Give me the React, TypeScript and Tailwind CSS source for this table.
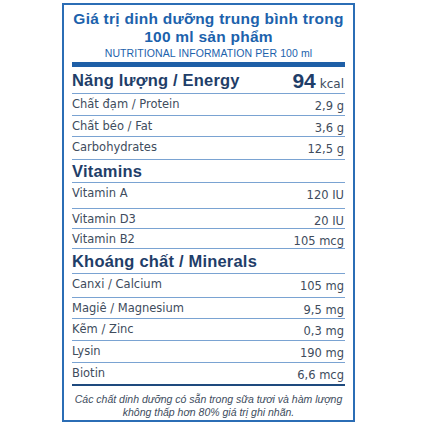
const rows1 = [
  { label: "Chất đạm / Protein", value: "2,9 g", h: "h-[22px]" },
  { label: "Chất béo / Fat", value: "3,6 g", h: "h-[21px]" },
  { label: "Carbohydrates", value: "12,5 g", h: "h-[23px]" },
];

const vitamins = [
  { label: "Vitamin A", value: "120 IU", h: "h-[26px]" },
  { label: "Vitamin D3", value: "20 IU", h: "h-[20px]" },
  { label: "Vitamin B2", value: "105 mcg", h: "h-[20px]" },
];

const minerals = [
  { label: "Canxi / Calcium", value: "105 mg", h: "h-[24px]" },
  { label: "Magiê / Magnesium", value: "9,5 mg", h: "h-[21px]" },
  { label: "Kẽm / Zinc", value: "0,3 mg", h: "h-[22px]" },
  { label: "Lysin", value: "190 mg", h: "h-[22px]" },
];

type Row = { label: string; value: string; h: string };

function NutrientRow({ label, value, h, last }: Row & { last?: boolean }) {
  return (
    <div
      className={`flex justify-between whitespace-nowrap font-['DejaVu_Sans',sans-serif] text-[11.5px] leading-none text-[#404c5d] ${h} ${
        last ? "border-b-2 border-[#1e4a7e]" : "border-b border-[#7aa3d2]"
      }`}
    >
      <span className="pt-[5px]">{label}</span>
      <span className="pt-[7px] pr-[1px]">{value}</span>
    </div>
  );
}

function SectionHeader({ title, h }: { title: string; h: string }) {
  return (
    <div className={`flex items-center whitespace-nowrap border-b border-[#7aa3d2] font-bold text-[16.5px] tracking-[0.2px] leading-none text-[#1f3e69] ${h}`}>
      {title}
    </div>
  );
}

export default function App() {
  return (
    <div className="w-[434px] h-[434px] bg-white pt-[3px] pl-[62px] font-['Liberation_Sans',Arial,sans-serif]">
      <div className="w-[293px] h-[419px] border-2 border-[#2b6db5] px-[8px] pt-[5px]">
        <div className="text-center text-[#1c62ac] whitespace-nowrap">
          <div className="font-bold text-[15.5px] tracking-[0.25px] leading-[18px]">Giá trị dinh dưỡng trung bình trong</div>
          <div className="font-bold text-[15.5px] tracking-[0.25px] leading-[18px]">100 ml sản phẩm</div>
          <div className="text-[10.5px] leading-[14px] tracking-[0.1px]">NUTRITIONAL INFORMATION PER 100 ml</div>
        </div>
        <div className="h-[5px] bg-[#1e5fa7] mt-[2px]" />
        <div className="flex justify-between items-center whitespace-nowrap h-[27px] border-b border-[#7aa3d2] text-[#1f3e69]">
          <span className="font-bold text-[16.5px] tracking-[0.2px] leading-none">Năng lượng / Energy</span>
          <span className="flex items-baseline gap-[4px] pr-[1px]">
            <span className="font-bold text-[21px] leading-none">94</span>
            <span className="font-['DejaVu_Sans',sans-serif] text-[12px] leading-none text-[#404c5d]">kcal</span>
          </span>
        </div>
        {rows1.map((r) => (
          <NutrientRow key={r.label} {...r} />
        ))}
        <SectionHeader title="Vitamins" h="h-[23px]" />
        {vitamins.map((r) => (
          <NutrientRow key={r.label} {...r} />
        ))}
        <SectionHeader title="Khoáng chất / Minerals" h="h-[25px]" />
        {minerals.map((r) => (
          <NutrientRow key={r.label} {...r} />
        ))}
        <NutrientRow label="Biotin" value="6,6 mcg" h="h-[23px]" last />
        <p className="text-center whitespace-nowrap italic text-[10.5px] leading-[13px] text-[#404c5d] pt-[7px]">
          Các chất dinh dưỡng có sẵn trong sữa tươi và hàm lượng
          <br />
          không thấp hơn 80% giá trị ghi nhãn.
        </p>
      </div>
    </div>
  );
}
